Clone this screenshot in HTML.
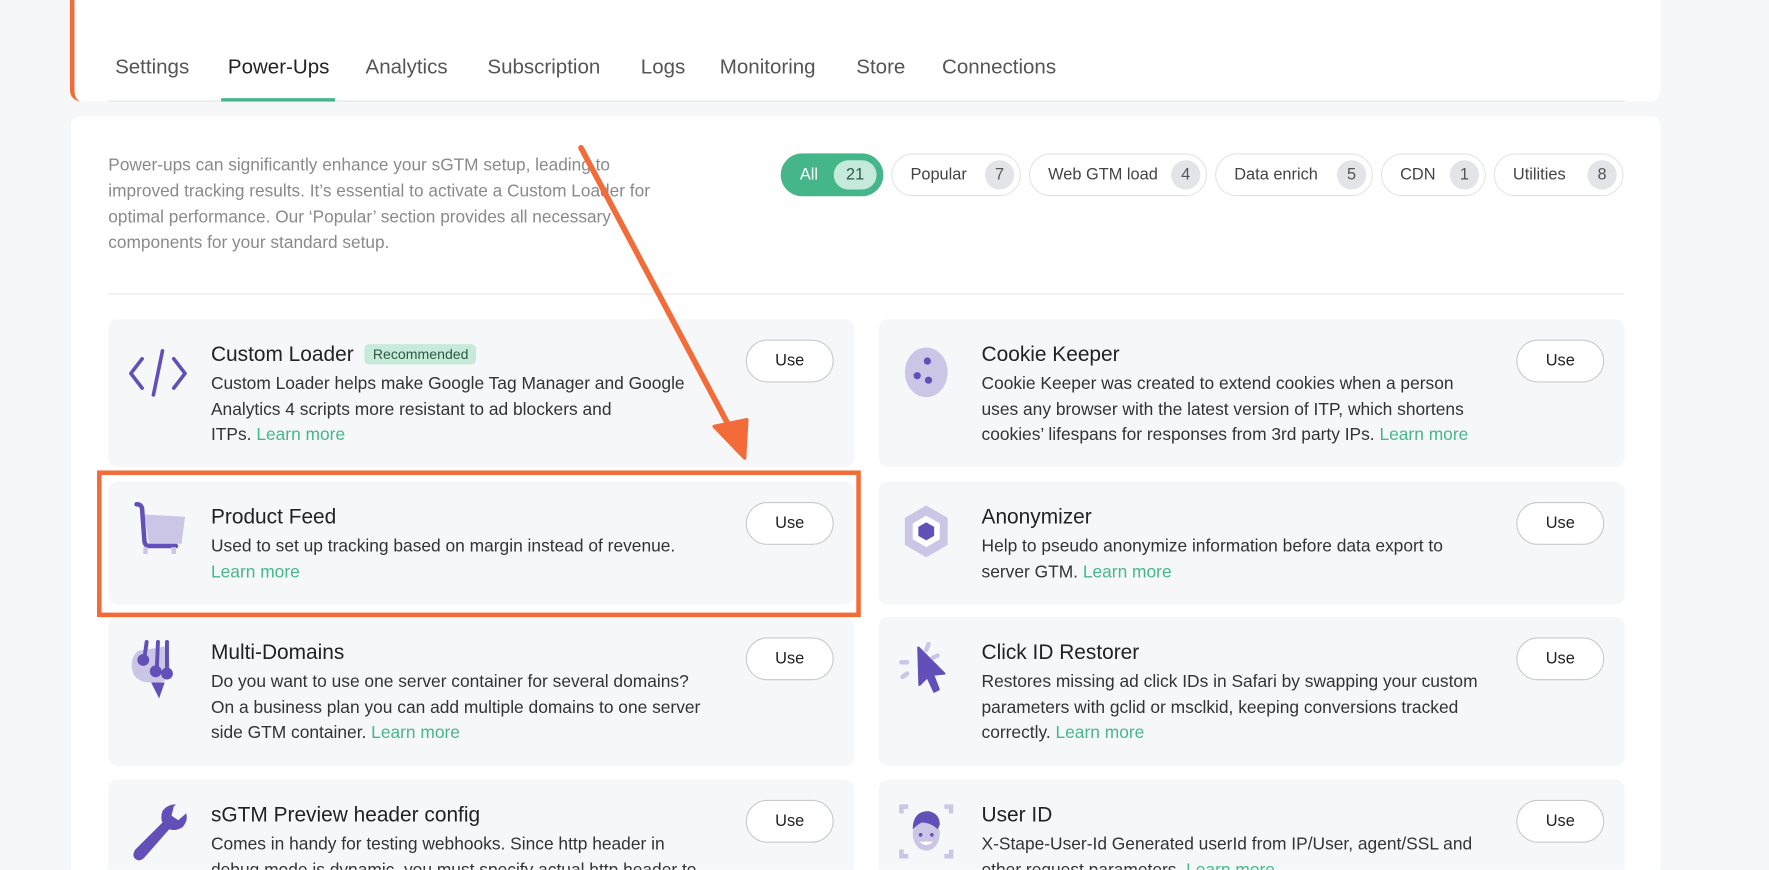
<!DOCTYPE html>
<html><head><meta charset="utf-8"><style>
*{box-sizing:border-box;margin:0;padding:0}
html,body{width:1769px;height:870px;overflow:hidden;background:#f6f7f9;font-family:"Liberation Sans",sans-serif}
#w{position:absolute;left:0;top:0;width:1568px;height:771px;overflow:hidden;transform:scale(1.12819);transform-origin:0 0}
.abs{position:absolute}
.top{left:62px;top:0;width:1410px;height:90px;background:#fff;border-radius:0 0 10px 10px;border-left:4px solid #f26b38}
.tab{position:absolute;top:49px;font-size:18.2px;color:#555}
.main{left:63px;top:103px;width:1409px;height:668px;background:#fff;border-radius:8px 8px 0 0}
.desc{left:96px;top:135px;width:496px;font-size:15.3px;line-height:23px;color:#8a8a8a}
.pill{position:absolute;top:136px;height:38px;border:1px solid #e3e4e6;border-radius:19px;background:#fff;font-size:14.5px;color:#444;display:flex;align-items:center;padding-left:16px}
.pill b{font-weight:400;position:absolute;right:5px;top:5px;width:26px;height:26px;border-radius:13px;background:#e2e4e8;color:#555;text-align:center;line-height:26px;font-size:14.5px}
.card{position:absolute;width:661px;background:#f6f7f9;border-radius:8px}
.card h3{position:absolute;left:91px;top:20px;font-size:18.5px;font-weight:500;color:#222}
.card p{position:absolute;left:91px;top:47px;width:440px;font-size:15.4px;line-height:22.5px;color:#333}
.card a{color:#46b78b;text-decoration:none}
.use{position:absolute;left:565px;top:18px;width:78px;height:38px;border:1px solid #c9cacc;border-radius:19px;background:#fff;font-size:14.5px;color:#222;text-align:center;line-height:36px}
.ic{position:absolute;left:16px;top:22px;width:56px;height:56px}
.rec{display:inline-block;background:#c7eadb;color:#2d5a47;font-size:12.5px;padding:2px 7px;border-radius:4px;margin-left:10px;vertical-align:2px;font-weight:500}
</style></head><body><div id="w">
<div class="abs top"></div>
<div class="tab" style="left:102px">Settings</div>
<div class="tab" style="left:202px;color:#222">Power-Ups</div>
<div class="tab" style="left:324px">Analytics</div>
<div class="tab" style="left:432px">Subscription</div>
<div class="tab" style="left:568px">Logs</div>
<div class="tab" style="left:638px">Monitoring</div>
<div class="tab" style="left:759px">Store</div>
<div class="tab" style="left:835px">Connections</div>
<div class="abs" style="left:96px;top:89px;width:1344px;height:1px;background:#e4e5e7"></div>
<div class="abs" style="left:196px;top:87px;width:101px;height:3px;background:#45b58a"></div>
<div class="abs main"></div>
<div class="abs desc">Power-ups can significantly enhance your sGTM setup, leading to improved tracking results. It’s essential to activate a Custom Loader for optimal performance. Our ‘Popular’ section provides all necessary components for your standard setup.</div>
<div class="pill" style="left:692px;width:91px;background:#45b58a;border-color:#45b58a;color:#fff">All<b style="width:38px;background:#c5eadb;color:#2d5a47">21</b></div>
<div class="pill" style="left:790px;width:115px">Popular<b>7</b></div>
<div class="pill" style="left:912px;width:158px">Web GTM load<b>4</b></div>
<div class="pill" style="left:1077px;width:140px">Data enrich<b>5</b></div>
<div class="pill" style="left:1224px;width:93px">CDN<b>1</b></div>
<div class="pill" style="left:1324px;width:115px">Utilities<b>8</b></div>
<div class="abs" style="left:96px;top:260px;width:1344px;height:1px;background:#e8e9eb"></div>

<div class="card" style="left:96px;top:283px;height:131px">
<svg class="ic" viewBox="0 0 56 56" style="top:20px"><g fill="none" stroke="#6250b8" stroke-width="3.2" stroke-linecap="round" stroke-linejoin="round"><path d="M14 15 L4 28 L14 41"/><path d="M42 15 L52 28 L42 41"/><path d="M32 8 L24 47"/></g></svg>
<h3>Custom Loader<span class="rec">Recommended</span></h3>
<p style="width:425px">Custom Loader helps make Google Tag Manager and Google Analytics 4 scripts more resistant to ad blockers and<br>ITPs. <a>Learn more</a></p><div class="use">Use</div></div>

<div class="card" style="left:96px;top:427px;height:109px">
<svg class="ic" viewBox="0 0 56 56" style="top:18px"><path d="M16 11 L52 13 L49 37 L20 37Z" fill="#cbc6e6"/><path d="M9 2 Q14 2 14 7 L16 34 Q16 39 21 39 L44 39" fill="none" stroke="#6250b8" stroke-width="4" stroke-linecap="round"/><rect x="15" y="40" width="4" height="6" fill="#cbc6e6"/><rect x="40" y="40" width="4" height="6" fill="#cbc6e6"/></svg>
<h3>Product Feed</h3>
<p style="width:450px">Used to set up tracking based on margin instead of revenue. <a>Learn more</a></p><div class="use">Use</div></div>

<div class="card" style="left:96px;top:547px;height:132px">
<svg class="ic" viewBox="0 0 56 56" style="top:18px"><path d="M10 12 Q2 20 6 32 Q10 40 22 40 L30 40 Q40 38 38 22 Q38 10 34 8Z" fill="#cbc6e6"/><path d="M22 40 L34 40 L29 54Z" fill="#6250b8"/><g stroke="#6250b8" stroke-width="3.5" stroke-linecap="round" fill="#6250b8"><path d="M18 4 L16 18"/><circle cx="15" cy="20" r="3.5"/><path d="M28 4 L27 28"/><circle cx="26" cy="30" r="3.5"/><path d="M36 4 L36 30"/><circle cx="36" cy="32" r="3.5"/></g></svg>
<h3>Multi-Domains</h3>
<p style="width:440px">Do you want to use one server container for several domains? On a business plan you can add multiple domains to one server side GTM container. <a>Learn more</a></p><div class="use">Use</div></div>

<div class="card" style="left:96px;top:691px;height:120px">
<svg class="ic" viewBox="0 0 56 56" style="top:18px"><path d="M44 4 Q36 4 32 10 Q30 16 32 20 L8 44 Q4 50 9 53 Q13 55 17 50 L38 26 Q44 28 50 24 Q55 18 53 12 L46 18 L40 14 L42 6Z" fill="#6250b8"/></svg>
<h3>sGTM Preview header config</h3>
<p>Comes in handy for testing webhooks. Since http header in debug mode is dynamic, you must specify actual http header to</p><div class="use">Use</div></div>

<div class="card" style="left:779px;top:283px;height:131px">
<svg class="ic" viewBox="0 0 56 56" style="top:22px"><ellipse cx="26" cy="25" rx="19" ry="22" fill="#cbc6e6"/><circle cx="27" cy="15" r="3.2" fill="#6250b8"/><circle cx="18" cy="28" r="3.2" fill="#6250b8"/><circle cx="28" cy="32" r="3.2" fill="#6250b8"/></svg>
<h3>Cookie Keeper</h3>
<p style="width:450px">Cookie Keeper was created to extend cookies when a person uses any browser with the latest version of ITP, which shortens cookies’ lifespans for responses from 3rd party IPs. <a>Learn more</a></p><div class="use">Use</div></div>

<div class="card" style="left:779px;top:427px;height:109px">
<svg class="ic" viewBox="0 0 56 56" style="top:18px"><path d="M26 3 L45 14 L45 38 L26 49 L7 38 L7 14Z" fill="#cbc6e6"/><path d="M26 12 L38 19 L38 33 L26 40 L14 33 L14 19Z" fill="#fff"/><path d="M26 18 L33 22 L33 30 L26 34 L19 30 L19 22Z" fill="#6250b8"/></svg>
<h3>Anonymizer</h3>
<p>Help to pseudo anonymize information before data export to server GTM. <a>Learn more</a></p><div class="use">Use</div></div>

<div class="card" style="left:779px;top:547px;height:132px">
<svg class="ic" viewBox="0 0 56 56" style="top:20px"><path d="M19 7 L42 30 L32 31 L37 44 L33 46 L27 33 L20 40Z" fill="#6250b8" stroke="#6250b8" stroke-width="2" stroke-linejoin="round"/><g stroke="#cbc6e6" stroke-width="4" stroke-linecap="round"><path d="M28 4 L26 9"/><path d="M36 14 L32 16"/><path d="M4 20 L9 20"/><path d="M5 33 L9 30"/></g></svg>
<h3>Click ID Restorer</h3>
<p style="width:450px">Restores missing ad click IDs in Safari by swapping your custom parameters with gclid or msclkid, keeping conversions tracked correctly. <a>Learn more</a></p><div class="use">Use</div></div>

<div class="card" style="left:779px;top:691px;height:120px">
<svg class="ic" viewBox="0 0 56 56" style="top:20px"><g fill="none" stroke="#cbc6e6" stroke-width="4"><path d="M4 10 L4 4 L10 4"/><path d="M42 4 L48 4 L48 10"/><path d="M4 42 L4 48 L10 48"/><path d="M42 48 L48 48 L48 42"/></g><ellipse cx="26" cy="28" rx="12" ry="15" fill="#cbc6e6"/><path d="M14 24 Q14 8 28 8 Q38 10 38 20 L36 24 Q30 18 22 18 Q18 20 14 24Z" fill="#6250b8"/><circle cx="21" cy="29" r="1.6" fill="#6250b8"/><circle cx="31" cy="29" r="1.6" fill="#6250b8"/><path d="M20 35 Q26 41 32 35Z" fill="#fff"/></svg>
<h3>User ID</h3>
<p>X-Stape-User-Id Generated userId from IP/User, agent/SSL and other request parameters. <a>Learn more</a></p><div class="use">Use</div></div>

<div class="abs" style="left:86px;top:417px;width:677px;height:130px;border:4px solid #f26b38"></div>
<svg class="abs" style="left:0;top:0" width="1568" height="771"><path d="M515 131 L649 383" stroke="#f26b38" stroke-width="5" fill="none" stroke-linecap="round"/><path d="M633 378 L662 372 L660 406Z" fill="#f26b38" stroke="#f26b38" stroke-width="3" stroke-linejoin="round"/></svg>
</div></body></html>
